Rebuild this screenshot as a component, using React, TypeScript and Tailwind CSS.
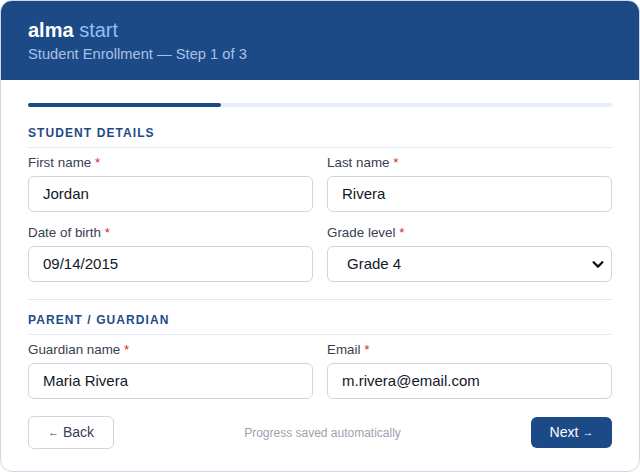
import React from "react";

function Label({ text }: { text: string }) {
  return (
    <div className="h-[18px] text-[13.4px] leading-[18px] text-[#374151]">
      {text} <span className="text-[#dc2626]">*</span>
    </div>
  );
}

function Field({ label, value }: { label: string; value: string }) {
  return (
    <div className="flex flex-col gap-[4px]">
      <Label text={label} />
      <div className="h-[36px] rounded-[6px] border border-[#d1d5db] bg-white pl-[14px] flex items-center text-[15px] text-[#111827]">
        {value}
      </div>
    </div>
  );
}

function SelectField({ label, value }: { label: string; value: string }) {
  return (
    <div className="flex flex-col gap-[4px]">
      <Label text={label} />
      <div className="h-[36px] rounded-[6px] border border-[#d1d5db] bg-white pl-[19px] pr-[6px] flex items-center justify-between text-[15px] text-[#111827]">
        <span>{value}</span>
        <svg width="14" height="14" viewBox="0 0 16 16" fill="none">
          <path d="M3 6l5 5 5-5" stroke="#111" strokeWidth="2.6" strokeLinecap="round" strokeLinejoin="round" />
        </svg>
      </div>
    </div>
  );
}

function SectionTitle({ text }: { text: string }) {
  return (
    <div className="h-[23px] border-b border-[#e3eaf5] text-[12px] leading-[16px] font-bold tracking-[0.09em] text-[#1e4b87]">
      {text}
    </div>
  );
}

export default function App() {
  return (
    <div
      className="w-[640px] h-[472px] bg-white"
      style={{ fontFamily: '"Liberation Sans", Arial, sans-serif' }}
    >
      <div className="w-[640px] h-[472px] rounded-[12px] border border-[#d4d8de] overflow-hidden flex flex-col bg-white">
        <div className="h-[79px] bg-[#1c4a87] px-[27px] pt-[15px]">
          <div className="text-[20px] leading-[28px]">
            <span className="font-bold text-white">alma</span>{" "}
            <span className="text-[#8ec2f2]">start</span>
          </div>
          <div className="text-[14.7px] leading-[20px] text-[#a9c2e4]">
            Student Enrollment — Step 1 of 3
          </div>
        </div>
        <div className="px-[27px] pt-[23px] flex flex-col">
          <div className="h-[4px] rounded-full bg-[#e8eef8]">
            <div className="h-[4px] w-[193px] rounded-full bg-[#1c4a87]" />
          </div>
          <div className="mt-[18px]">
            <SectionTitle text="STUDENT DETAILS" />
          </div>
          <div className="mt-[6px] grid grid-cols-2 gap-x-[14px] gap-y-[12px]">
            <Field label="First name" value="Jordan" />
            <Field label="Last name" value="Rivera" />
            <Field label="Date of birth" value="09/14/2015" />
            <SelectField label="Grade level" value="Grade 4" />
          </div>
          <div className="mt-[17px] border-t border-[#e5e7eb] pt-[12px]">
            <SectionTitle text="PARENT / GUARDIAN" />
          </div>
          <div className="mt-[6px] grid grid-cols-2 gap-x-[14px]">
            <Field label="Guardian name" value="Maria Rivera" />
            <Field label="Email" value="m.rivera@email.com" />
          </div>
          <div className="mt-[17px] flex items-center justify-between">
            <div className="w-[86px] h-[33px] rounded-[6px] border border-[#d1d5db] bg-white flex items-center justify-center text-[14px] text-[#374151]">
              <span className="text-[11px] mr-[4px]">←</span>Back
            </div>
            <div className="text-[12px] text-[#9ca3af]">Progress saved automatically</div>
            <div className="w-[81px] h-[31px] rounded-[6px] bg-[#1c4a87] flex items-center justify-center text-[14px] text-white">
              Next<span className="text-[11px] ml-[4px]">→</span>
            </div>
          </div>
        </div>
      </div>
    </div>
  );
}
